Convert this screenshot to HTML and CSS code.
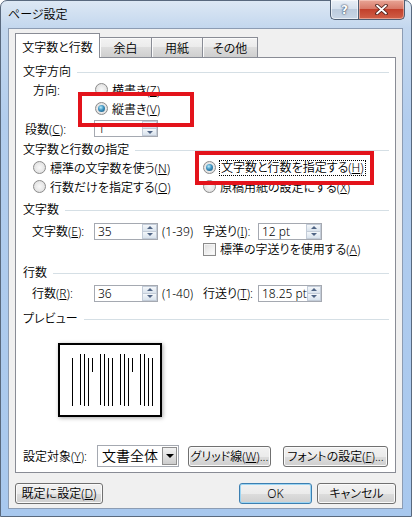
FILE: index.html
```html
<!DOCTYPE html>
<html lang="ja">
<head>
    <meta charset="UTF-8">
    <title>ページ設定</title>
    <link rel="stylesheet" href="styles.css">
</head>
<body>
<div class="window">
    <div class="titlebar">
        <span class="title">ページ設定</span>
        <div class="caption-buttons">
            <div class="cap-btn help">?</div>
            <div class="cap-btn close">
                <svg width="13" height="11" viewBox="0 0 13 11">
                    <path d="M2 1.5 L11 9.5 M11 1.5 L2 9.5" stroke="#4a1c16" stroke-width="3.6" stroke-linecap="round"/>
                    <path d="M2 1.5 L11 9.5 M11 1.5 L2 9.5" stroke="#ffffff" stroke-width="1.8" stroke-linecap="round"/>
                </svg>
            </div>
        </div>
    </div>

    <div class="client">
        <div class="tabs">
            <div class="tab active">文字数と行数</div>
            <div class="tab w-margin">余白</div>
            <div class="tab w-paper">用紙</div>
            <div class="tab w-other">その他</div>
        </div>

        <div class="panel">
            <!-- 文字方向 -->
            <div class="group-title">文字方向</div>
            <div class="direction">
                <span class="label-dir">方向:</span>
                <label class="radio"><span class="radio-mark"></span><span>横書き(<u>Z</u>)</span></label>
                <span></span>
                <label class="radio"><span class="radio-mark checked"></span><span>縦書き(<u>V</u>)</span></label>
                <span class="label-cols">段数(<u>C</u>):</span>
                <div class="spin">
                    <span class="spin-value">1</span>
                    <span class="spin-buttons"><span class="spin-up"></span><span class="spin-down"></span></span>
                </div>
            </div>

            <!-- 文字数と行数の指定 -->
            <div class="group-title gap-3">文字数と行数の指定</div>
            <div class="grid-options">
                <label class="radio indent"><span class="radio-mark"></span><span>標準の文字数を使う(<u>N</u>)</span></label>
                <label class="radio"><span class="radio-mark checked"></span><span class="focus">文字数と行数を指定する(<u>H</u>)</span></label>
                <label class="radio indent"><span class="radio-mark"></span><span>行数だけを指定する(<u>O</u>)</span></label>
                <label class="radio"><span class="radio-mark"></span><span>原稿用紙の設定にする(<u>X</u>)</span></label>
            </div>

            <!-- 文字数 -->
            <div class="group-title gap-6">文字数</div>
            <div class="number-row gap-2">
                <span class="num-label">文字数(<u>E</u>):</span>
                <div class="spin">
                    <span class="spin-value">35</span>
                    <span class="spin-buttons"><span class="spin-up"></span><span class="spin-down"></span></span>
                </div>
                <span class="range">(1-39)</span>
                <span>字送り(<u>I</u>):</span>
                <div class="spin">
                    <span class="spin-value">12 pt</span>
                    <span class="spin-buttons"><span class="spin-up"></span><span class="spin-down"></span></span>
                </div>
            </div>
            <div class="check-row">
                <label class="checkbox"><span class="check-mark"></span><span>標準の字送りを使用する(<u>A</u>)</span></label>
            </div>

            <!-- 行数 -->
            <div class="group-title gap-9">行数</div>
            <div class="number-row gap-1">
                <span class="num-label">行数(<u>R</u>):</span>
                <div class="spin">
                    <span class="spin-value">36</span>
                    <span class="spin-buttons"><span class="spin-up"></span><span class="spin-down"></span></span>
                </div>
                <span class="range">(1-40)</span>
                <span>行送り(<u>T</u>):</span>
                <div class="spin">
                    <span class="spin-value">18.25 pt</span>
                    <span class="spin-buttons"><span class="spin-up"></span><span class="spin-down"></span></span>
                </div>
            </div>

            <!-- プレビュー -->
            <div class="group-title gap-7">プレビュー</div>
            <div class="preview">
                <svg width="100" height="70" viewBox="0 0 100 70" stroke="#000" stroke-width="1">
                    <line x1="12.5" y1="13" x2="12.5" y2="61"/>
                    <line x1="20.5" y1="9" x2="20.5" y2="60"/>
                    <line x1="24.5" y1="9" x2="24.5" y2="61"/>
                    <line x1="28.5" y1="13" x2="28.5" y2="61"/>
                    <line x1="32.5" y1="13" x2="32.5" y2="27"/>
                    <line x1="40.5" y1="9" x2="40.5" y2="60"/>
                    <line x1="44.5" y1="9" x2="44.5" y2="61"/>
                    <line x1="48.5" y1="13" x2="48.5" y2="61"/>
                    <line x1="52.5" y1="13" x2="52.5" y2="61"/>
                    <line x1="60.5" y1="9" x2="60.5" y2="60"/>
                    <line x1="64.5" y1="9" x2="64.5" y2="61"/>
                    <line x1="68.5" y1="13" x2="68.5" y2="61"/>
                    <line x1="72.5" y1="13" x2="72.5" y2="27"/>
                    <line x1="80.5" y1="9" x2="80.5" y2="60"/>
                    <line x1="84.5" y1="9" x2="84.5" y2="61"/>
                    <line x1="88.5" y1="13" x2="88.5" y2="61"/>
                    <line x1="92.5" y1="13" x2="92.5" y2="61"/>
                </svg>
            </div>

            <!-- 設定対象 -->
            <div class="target-row">
                <span class="target-label">設定対象(<u>Y</u>):</span>
                <div class="combo">
                    <span class="combo-value">文書全体</span>
                    <span class="combo-button"></span>
                </div>
                <button class="btn w-grid">グリッド線(<u>W</u>)...</button>
                <button class="btn w-font">フォントの設定(<u>F</u>)...</button>
            </div>
        </div>

        <div class="dialog-buttons">
            <button class="btn w-default">既定に設定(<u>D</u>)</button>
            <button class="btn default w-ok">OK</button>
            <button class="btn w-cancel">キャンセル</button>
        </div>
    </div>

    <!-- red annotation boxes -->
    <div class="mark-box box-vertical"></div>
    <div class="mark-box box-grid"></div>
</div>
</body>
</html>
```

FILE: styles.css
```css
html, body {
    margin: 0;
    padding: 0;
    width: 412px;
    height: 517px;
    overflow: hidden;
    background: #ffffff;
}

body {
    font-family: "Noto Sans", "Noto Sans CJK JP", sans-serif;
    font-size: 12px;
    font-weight: 350;
    color: #000000;
    font-feature-settings: "palt" 1;
}

u {
    text-decoration: underline;
    text-underline-offset: 1px;
}

/* Window frame */
.window {
    position: relative;
    width: 412px;
    height: 517px;
    box-sizing: border-box;
    display: flex;
    flex-direction: column;
    border: 1px solid #59697e;
    border-radius: 7px 7px 0 0;
    background: linear-gradient(to bottom, #dde8f4 0, #c3d7ee 27px, #b2cdee 120px, #a8c8ee 100%);
}

.titlebar {
    height: 27px;
    display: flex;
    align-items: flex-start;
}

.title {
    padding: 6px 0 0 7px;
    line-height: 15px;
    color: #000000;
}

.caption-buttons {
    margin: -1px 6px 0 auto;
    display: flex;
}

.cap-btn {
    height: 20px;
    box-sizing: border-box;
    display: flex;
    align-items: center;
    justify-content: center;
    border: 1px solid #4f5e73;
    border-top: none;
}

.help {
    width: 28px;
    border-radius: 0 0 0 5px;
    border-right: none;
    background: linear-gradient(to bottom, #e9eff6 0, #d6e1ee 45%, #bccbdd 50%, #c9d6e6 100%);
    box-shadow: inset 0 0 0 1px rgba(255, 255, 255, 0.6);
    color: #ffffff;
    font-family: "DejaVu Sans", sans-serif;
    font-weight: bold;
    font-size: 12px;
    text-shadow: 0 0 2px #2c3c55, 0 0 1px #2c3c55;
}

.close {
    width: 47px;
    border-radius: 0 0 5px 0;
    background: linear-gradient(to bottom, #e8a596 0, #d87a69 45%, #c2402c 50%, #d06048 100%);
    box-shadow: inset 0 0 0 1px rgba(255, 220, 210, 0.5);
}

/* Client area */
.client {
    flex: 1;
    margin: 0 8px 7px 7px;
    background: #f0f0f0;
    border: 1px solid #8c9cb3;
    display: flex;
    flex-direction: column;
}

.tabs {
    height: 28px;
    display: flex;
    align-items: flex-end;
    padding-left: 6px;
}

.tab {
    box-sizing: border-box;
    height: 20px;
    padding-top: 3px;
    line-height: 15px;
    text-align: center;
    border: 1px solid #898c95;
    border-bottom: none;
    margin-left: -1px;
    background: linear-gradient(to bottom, #f3f3f3 0, #ebebeb 50%, #dddddd 50%, #cfcfcf 100%);
    box-shadow: inset 1px 1px 0 #fbfbfb;
}

.tab.active {
    position: relative;
    z-index: 1;
    width: 85px;
    height: 25px;
    margin-left: 0;
    margin-bottom: -1px;
    padding-top: 6px;
    background: #ffffff;
    box-shadow: none;
}

.w-margin { width: 53px; }
.w-paper { width: 52px; }
.w-other { width: 56px; }

/* Tab page */
.panel {
    height: 416px;
    box-sizing: border-box;
    margin: 0 6px;
    border: 1px solid #898c95;
    background: #ffffff;
    padding: 6px 6px 0 7px;
}

.group-title {
    height: 16px;
    line-height: 16px;
    display: flex;
    align-items: center;
    gap: 6px;
    white-space: nowrap;
}

.group-title::after {
    content: "";
    flex: 1;
    border-top: 1px solid #d5dfe5;
}

.gap-1 { margin-top: 1px; }
.gap-2 { margin-top: 2px; }
.gap-3 { margin-top: 3px; }
.gap-6 { margin-top: 6px; }
.gap-7 { margin-top: 7px; }
.gap-9 { margin-top: 9px; }

.direction {
    display: grid;
    grid-template-columns: 71px auto;
    grid-template-rows: 19px 19px 21px;
    align-items: center;
}

.label-dir { padding-left: 10px; }
.label-cols { padding-left: 2px; }

.grid-options {
    display: grid;
    grid-template-columns: 180px auto;
    grid-auto-rows: 19px;
    align-items: center;
}

.indent { padding-left: 10px; }

.radio, .checkbox {
    display: flex;
    align-items: center;
    gap: 4px;
    white-space: nowrap;
}

.direction .radio { padding-left: 1px; }

.radio-mark {
    position: relative;
    width: 13px;
    height: 13px;
    box-sizing: border-box;
    border-radius: 50%;
    border: 1px solid #8b8b8b;
    background: radial-gradient(circle at 50% 50%, #f8f8f8 0, #e6e6e6 60%, #d2d2d2 100%);
    flex: none;
}

.radio-mark.checked::after {
    content: "";
    position: absolute;
    left: 2px;
    top: 2px;
    width: 7px;
    height: 7px;
    border-radius: 50%;
    background: radial-gradient(circle at 40% 35%, #b9ecfb 0, #3d92c0 45%, #174f72 100%);
}

.focus {
    outline: 1px dotted #000000;
    outline-offset: 0;
    padding: 0 1px;
    line-height: 14px;
}

.check-row {
    height: 14px;
    padding-left: 180px;
    display: flex;
    align-items: center;
}

.check-mark {
    width: 13px;
    height: 13px;
    box-sizing: border-box;
    border: 1px solid #8b8b8b;
    background: linear-gradient(135deg, #dcdcdc 0, #f2f2f2 60%, #ffffff 100%);
    box-shadow: inset 0 0 0 1px #f4f4f4;
    flex: none;
}

.number-row {
    height: 22px;
    display: grid;
    grid-template-columns: 71px 64px 45px 55px 64px;
    align-items: center;
    white-space: nowrap;
}

.num-label { padding-left: 9px; }
.range { padding-left: 4px; }

/* Spin box */
.spin {
    width: 64px;
    height: 17px;
    box-sizing: border-box;
    border: 1px solid #a5a9b1;
    background: #ffffff;
    display: flex;
}

.spin-value {
    flex: 1;
    padding-left: 3px;
    line-height: 15px;
}

.spin-buttons {
    width: 15px;
    display: flex;
    flex-direction: column;
}

.spin-up, .spin-down {
    flex: 1;
    display: flex;
    align-items: center;
    justify-content: center;
    box-sizing: border-box;
    border: 1px solid #c3ccd8;
    background: linear-gradient(to bottom, #f4f7fa, #d9e3ed);
}

.spin-down { border-top: none; }

.spin-up::after, .spin-down::after {
    content: "";
    border-left: 3px solid transparent;
    border-right: 3px solid transparent;
}

.spin-up::after { border-bottom: 3px solid #506585; }
.spin-down::after { border-top: 3px solid #506585; }

/* Preview page */
.preview {
    margin: 16px 0 0 35px;
    width: 104px;
    height: 74px;
    box-sizing: border-box;
    border: 2px solid #000000;
    background: #ffffff;
    box-shadow: 1px 1px 4px rgba(0, 0, 0, 0.35);
}

.preview svg {
    display: block;
}

/* Bottom of the page */
.target-row {
    margin-top: 28px;
    height: 22px;
    display: flex;
    align-items: center;
}

.target-label {
    width: 74px;
    white-space: nowrap;
}

.combo {
    width: 82px;
    height: 22px;
    box-sizing: border-box;
    border: 1px solid #a5a9b1;
    background: #ffffff;
    display: flex;
    align-items: center;
    margin-right: 9px;
}

.combo-value {
    flex: 1;
    padding-left: 4px;
    font-size: 14px;
    line-height: 18px;
}

.combo-button {
    width: 15px;
    height: 18px;
    margin-right: 1px;
    box-sizing: border-box;
    border: 1px solid #8f8f8f;
    background: linear-gradient(to bottom, #f2f2f2 0, #e0e0e0 50%, #cdcdcd 100%);
    display: flex;
    align-items: center;
    justify-content: center;
}

.combo-button::after {
    content: "";
    border-left: 4px solid transparent;
    border-right: 4px solid transparent;
    border-top: 4px solid #000000;
}

/* Push buttons */
.btn {
    height: 21px;
    box-sizing: border-box;
    padding: 0;
    border: 1px solid #707070;
    border-radius: 3px;
    background: linear-gradient(to bottom, #f2f2f2 0, #ebebeb 50%, #dddddd 50%, #cfcfcf 100%);
    box-shadow: inset 0 0 0 1px #fafafa;
    font-family: inherit;
    font-size: 12px;
    font-weight: inherit;
    font-feature-settings: "palt" 1;
    color: #000000;
    line-height: 15px;
    white-space: nowrap;
}

.btn.default {
    border-color: #3c7fb1;
    box-shadow: inset 0 0 0 1px #9cd5f3;
}

.w-grid { width: 83px; margin-right: 12px; }
.w-font { width: 105px; }

.dialog-buttons {
    display: flex;
    padding: 10px 6px 0 6px;
    gap: 5px;
}

.w-default { width: 88px; margin-right: auto; }
.w-ok { width: 73px; }
.w-cancel { width: 79px; }

/* Red marks drawn over the dialog */
.mark-box {
    position: absolute;
    box-sizing: border-box;
    border: 4px solid #e3131b;
}

.box-vertical {
    left: 77px;
    top: 91px;
    width: 116px;
    height: 35px;
}

.box-grid {
    left: 194px;
    top: 150px;
    width: 179px;
    height: 34px;
}
```
